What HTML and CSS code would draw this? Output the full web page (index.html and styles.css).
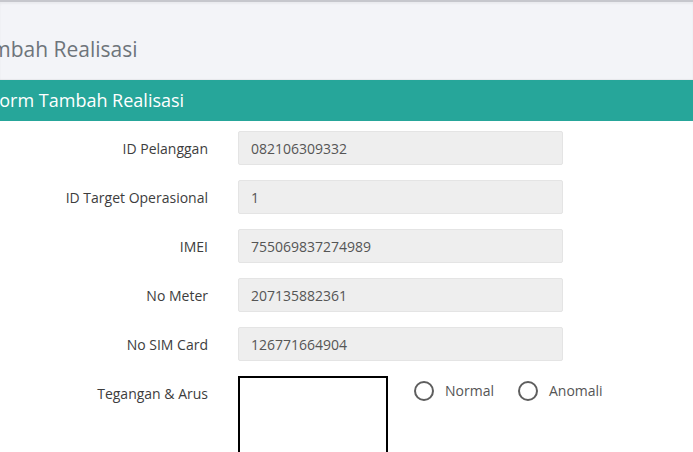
FILE: index.html
```html
<!DOCTYPE html>
<html lang="id">
<head>
<meta charset="utf-8">
<title>Tambah Realisasi</title>
<link rel="stylesheet" href="styles.css">
</head>
<body>
<div class="page">
  <header class="topbar">
    <h1 class="page-title">Tambah Realisasi</h1>
  </header>
  <section class="panel">
    <div class="panel-heading">Form Tambah Realisasi</div>
    <form class="form">
      <div class="row">
        <label class="label">ID Pelanggan</label>
        <div class="input">082106309332</div>
      </div>
      <div class="row">
        <label class="label">ID Target Operasional</label>
        <div class="input">1</div>
      </div>
      <div class="row">
        <label class="label">IMEI</label>
        <div class="input">755069837274989</div>
      </div>
      <div class="row">
        <label class="label">No Meter</label>
        <div class="input">207135882361</div>
      </div>
      <div class="row">
        <label class="label">No SIM Card</label>
        <div class="input">126771664904</div>
      </div>
      <div class="row">
        <label class="label">Tegangan &amp; Arus</label>
        <div class="photo"></div>
        <div class="radios">
          <span class="radio"><span class="circle"></span>Normal</span>
          <span class="radio"><span class="circle"></span>Anomali</span>
        </div>
      </div>
    </form>
  </section>
</div>
</body>
</html>
```

FILE: styles.css
```css
html, body {
  margin: 0;
  padding: 0;
  background: #ffffff;
  overflow: hidden;
}

body {
  font-family: "Open Sans", "Liberation Sans", sans-serif;
  width: 693px;
  height: 452px;
}

.topbar {
  height: 78px;
  background: #f3f4f8;
  border-top: 2px solid #c6c7cd;
  box-shadow: inset 0 2px 2px rgba(0, 0, 0, 0.04), inset 0 -1px 1px rgba(0, 0, 0, 0.05);
}

.page-title {
  margin: 0 0 0 -32px;
  padding-top: 36px;
  font-size: 21px;
  line-height: 22px;
  font-weight: 400;
  color: #6e747b;
  white-space: nowrap;
}

.panel-heading {
  height: 41px;
  line-height: 41px;
  background: #26a69a;
  color: #ffffff;
  font-size: 18px;
  padding-left: 0;
  margin-left: -10px;
  white-space: nowrap;
}

.form {
  padding-top: 10px;
}

.row {
  display: flex;
  align-items: flex-start;
  margin-bottom: 15px;
}

.label {
  width: 208px;
  height: 34px;
  box-sizing: border-box;
  padding-top: 1px;
  text-align: right;
  font-size: 14px;
  line-height: 34px;
  color: #3d3d3d;
  margin-right: 30px;
  flex: none;
}

.input {
  width: 325px;
  height: 34px;
  box-sizing: border-box;
  background: #eeeeee;
  border: 1px solid #e4e4e4;
  border-radius: 2px;
  padding: 1px 0 0 12px;
  font-size: 14px;
  line-height: 31px;
  color: #555555;
}

.photo {
  width: 150px;
  height: 150px;
  box-sizing: border-box;
  border: 2px solid #000000;
  flex: none;
}

.radios {
  display: flex;
  gap: 24px;
  margin-left: 26px;
  margin-top: 5px;
}

.radio {
  display: flex;
  align-items: center;
  gap: 11px;
  font-size: 14px;
  line-height: 20px;
  color: #555555;
}

.circle {
  width: 20px;
  height: 20px;
  box-sizing: border-box;
  border: 2px solid #5e5e5e;
  border-radius: 50%;
  flex: none;
}
```
